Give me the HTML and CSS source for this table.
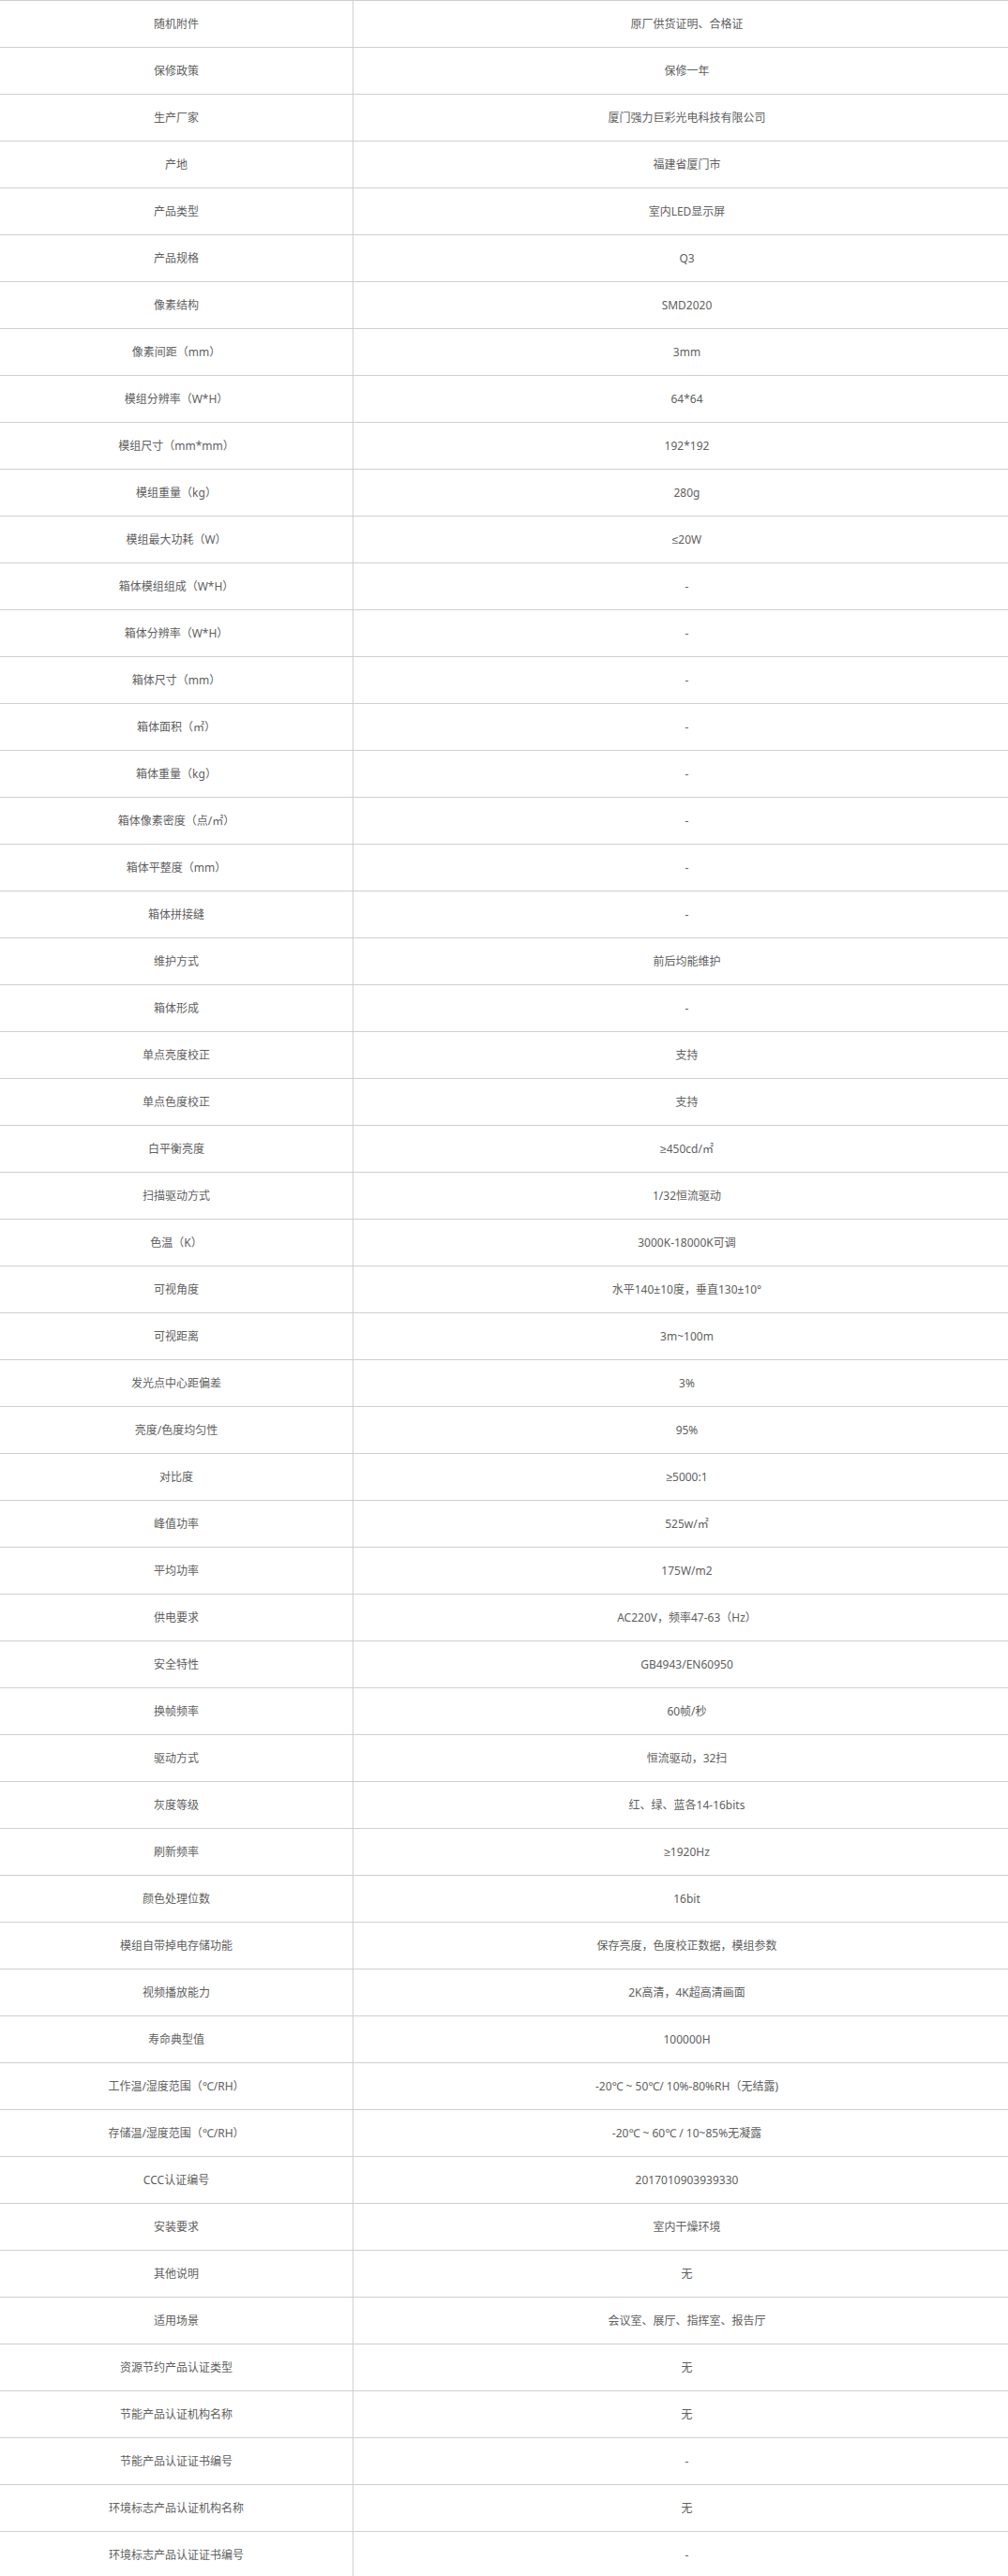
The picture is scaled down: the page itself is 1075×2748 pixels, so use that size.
FILE: index.html
```html
<!DOCTYPE html>
<html lang="zh-CN">
<head>
<meta charset="utf-8">
<title>产品参数</title>
<link rel="stylesheet" href="styles.css">
</head>
<body>
<div class="spec">
  <div class="row"><div class="k">随机附件</div><div class="v">原厂供货证明、合格证</div></div>
  <div class="row"><div class="k">保修政策</div><div class="v">保修一年</div></div>
  <div class="row"><div class="k">生产厂家</div><div class="v">厦门强力巨彩光电科技有限公司</div></div>
  <div class="row"><div class="k">产地</div><div class="v">福建省厦门市</div></div>
  <div class="row"><div class="k">产品类型</div><div class="v">室内LED显示屏</div></div>
  <div class="row"><div class="k">产品规格</div><div class="v">Q3</div></div>
  <div class="row"><div class="k">像素结构</div><div class="v">SMD2020</div></div>
  <div class="row"><div class="k">像素间距（mm）</div><div class="v">3mm</div></div>
  <div class="row"><div class="k">模组分辨率（W*H）</div><div class="v">64*64</div></div>
  <div class="row"><div class="k">模组尺寸（mm*mm）</div><div class="v">192*192</div></div>
  <div class="row"><div class="k">模组重量（kg）</div><div class="v">280g</div></div>
  <div class="row"><div class="k">模组最大功耗（W）</div><div class="v">≤20W</div></div>
  <div class="row"><div class="k">箱体模组组成（W*H）</div><div class="v">-</div></div>
  <div class="row"><div class="k">箱体分辨率（W*H）</div><div class="v">-</div></div>
  <div class="row"><div class="k">箱体尺寸（mm）</div><div class="v">-</div></div>
  <div class="row"><div class="k">箱体面积（㎡）</div><div class="v">-</div></div>
  <div class="row"><div class="k">箱体重量（kg）</div><div class="v">-</div></div>
  <div class="row"><div class="k">箱体像素密度（点/㎡）</div><div class="v">-</div></div>
  <div class="row"><div class="k">箱体平整度（mm）</div><div class="v">-</div></div>
  <div class="row"><div class="k">箱体拼接缝</div><div class="v">-</div></div>
  <div class="row"><div class="k">维护方式</div><div class="v">前后均能维护</div></div>
  <div class="row"><div class="k">箱体形成</div><div class="v">-</div></div>
  <div class="row"><div class="k">单点亮度校正</div><div class="v">支持</div></div>
  <div class="row"><div class="k">单点色度校正</div><div class="v">支持</div></div>
  <div class="row"><div class="k">白平衡亮度</div><div class="v">≥450cd/㎡</div></div>
  <div class="row"><div class="k">扫描驱动方式</div><div class="v">1/32恒流驱动</div></div>
  <div class="row"><div class="k">色温（K）</div><div class="v">3000K-18000K可调</div></div>
  <div class="row"><div class="k">可视角度</div><div class="v">水平140±10度，垂直130±10°</div></div>
  <div class="row"><div class="k">可视距离</div><div class="v">3m~100m</div></div>
  <div class="row"><div class="k">发光点中心距偏差</div><div class="v">3%</div></div>
  <div class="row"><div class="k">亮度/色度均匀性</div><div class="v">95%</div></div>
  <div class="row"><div class="k">对比度</div><div class="v">≥5000:1</div></div>
  <div class="row"><div class="k">峰值功率</div><div class="v">525w/㎡</div></div>
  <div class="row"><div class="k">平均功率</div><div class="v">175W/m2</div></div>
  <div class="row"><div class="k">供电要求</div><div class="v">AC220V，频率47-63（Hz）</div></div>
  <div class="row"><div class="k">安全特性</div><div class="v">GB4943/EN60950</div></div>
  <div class="row"><div class="k">换帧频率</div><div class="v">60帧/秒</div></div>
  <div class="row"><div class="k">驱动方式</div><div class="v">恒流驱动，32扫</div></div>
  <div class="row"><div class="k">灰度等级</div><div class="v">红、绿、蓝各14-16bits</div></div>
  <div class="row"><div class="k">刷新频率</div><div class="v">≥1920Hz</div></div>
  <div class="row"><div class="k">颜色处理位数</div><div class="v">16bit</div></div>
  <div class="row"><div class="k">模组自带掉电存储功能</div><div class="v">保存亮度，色度校正数据，模组参数</div></div>
  <div class="row"><div class="k">视频播放能力</div><div class="v">2K高清，4K超高清画面</div></div>
  <div class="row"><div class="k">寿命典型值</div><div class="v">100000H</div></div>
  <div class="row"><div class="k">工作温/湿度范围（℃/RH）</div><div class="v">-20℃ ~ 50℃/ 10%-80%RH（无结露)</div></div>
  <div class="row"><div class="k">存储温/湿度范围（℃/RH）</div><div class="v">-20℃ ~ 60℃ / 10~85%无凝露</div></div>
  <div class="row"><div class="k">CCC认证编号</div><div class="v">2017010903939330</div></div>
  <div class="row"><div class="k">安装要求</div><div class="v">室内干燥环境</div></div>
  <div class="row"><div class="k">其他说明</div><div class="v">无</div></div>
  <div class="row"><div class="k">适用场景</div><div class="v">会议室、展厅、指挥室、报告厅</div></div>
  <div class="row"><div class="k">资源节约产品认证类型</div><div class="v">无</div></div>
  <div class="row"><div class="k">节能产品认证机构名称</div><div class="v">无</div></div>
  <div class="row"><div class="k">节能产品认证证书编号</div><div class="v">-</div></div>
  <div class="row"><div class="k">环境标志产品认证机构名称</div><div class="v">无</div></div>
  <div class="row"><div class="k">环境标志产品认证证书编号</div><div class="v">-</div></div>
</div>
</body>
</html>
```
FILE: styles.css
```css
html, body {
  margin: 0;
  padding: 0;
  background: #fff;
}
body {
  overflow-x: hidden;
  font-family: "Noto Sans", "Liberation Sans", "Noto Sans CJK SC", sans-serif;
  font-size: 12px;
  color: #606060;
}
.spec {
  width: 1088px;
}
.row {
  display: grid;
  grid-template-columns: 377px 1fr;
  height: 50px;
  box-sizing: border-box;
  border-top: 1px solid #cfcfcf;
}
.k, .v {
  display: flex;
  align-items: center;
  justify-content: center;
  text-align: center;
  line-height: 1;
}
.k {
  box-sizing: border-box;
  border-right: 1px solid #cfcfcf;
}
```
